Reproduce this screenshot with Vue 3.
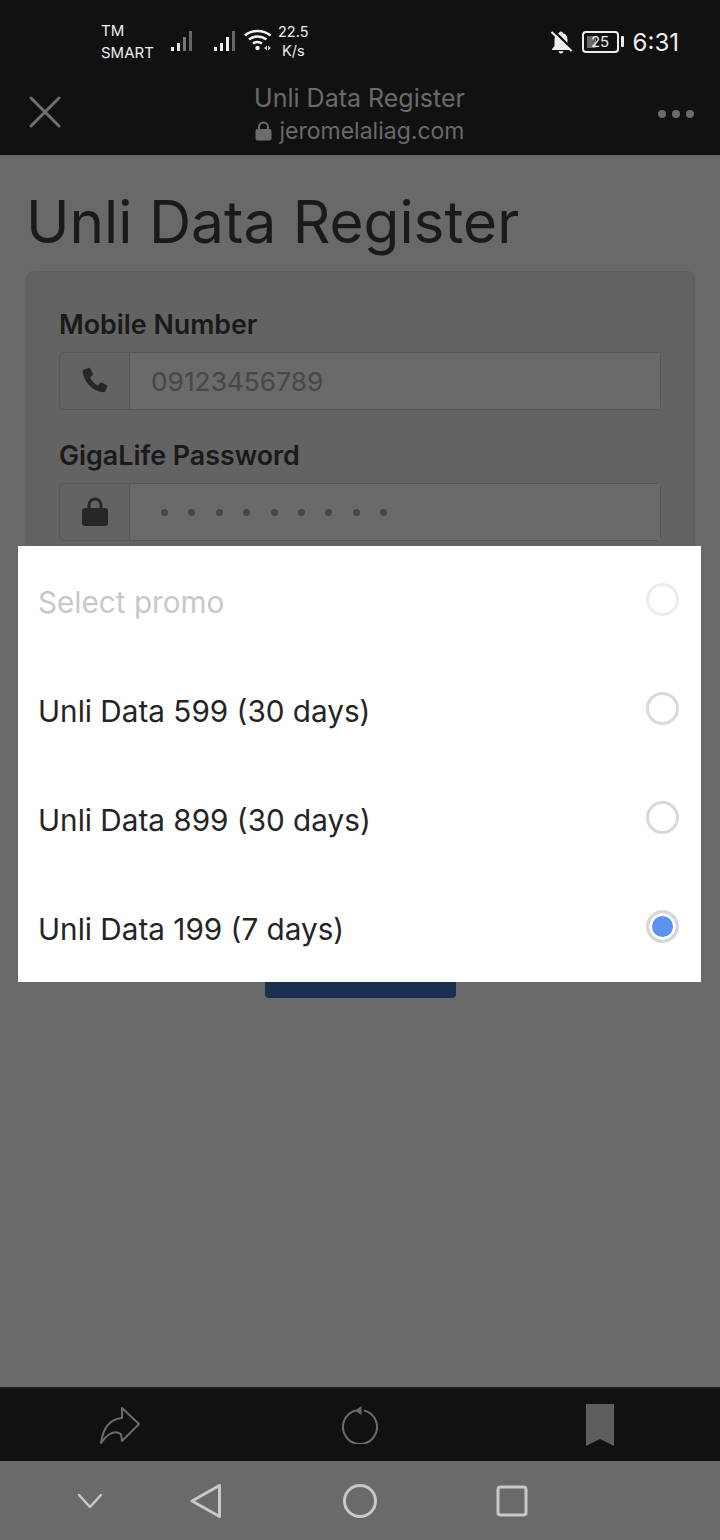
<template>
  <div class="screen">
    <div class="top-dark">
      <div class="status">
        <div class="carrier"><span>TM</span><span>SMART</span></div>
        <svg class="signal one" width="24" height="22" viewBox="0 0 24 22">
          <rect x="0" y="17" width="3" height="4" fill="#eee" />
          <rect x="6" y="13" width="3" height="8" fill="#ddd" />
          <rect x="12" y="7" width="3" height="14" fill="#777" />
          <rect x="18" y="1" width="3" height="20" fill="#666" />
        </svg>
        <svg class="signal two" width="24" height="22" viewBox="0 0 24 22">
          <rect x="0" y="17" width="3" height="4" fill="#eee" />
          <rect x="6" y="13" width="3" height="8" fill="#eee" />
          <rect x="12" y="7" width="3" height="14" fill="#eee" />
          <rect x="18" y="1" width="3" height="20" fill="#666" />
        </svg>
        <svg class="wifi" width="29" height="24" viewBox="0 0 29 24" fill="none" stroke="#f2f2f2" stroke-width="2.6">
          <path d="M1 7.500C8 1.500 19 1.500 26.500 7.500" />
          <path d="M5 11.500C10 7.500 17 7.500 22.500 11.500" />
          <path d="M9 15.500C12 13.500 15 13.500 18 15.500" />
          <circle cx="13.500" cy="20" r="2.200" fill="#f2f2f2" stroke="none" />
          <path d="M23 17.500v5l-3-2.500zM24 17.500v5l3-2.500z" fill="#ccc" stroke="none" />
        </svg>
        <div class="speed"><span>22.5</span><span>K/s</span></div>
        <div class="status-right">
          <svg width="24" height="24" viewBox="0 0 24 24">
            <path d="M12 1.500c-1.200 0-2 .8-2 1.800C6.800 4 5.500 6.500 5.500 10v6L3 19v1h18v-1l-2.500-3v-6c0-3.500-1.300-6-4.500-6.700 0-1-.8-1.800-2-1.800z" fill="#eee" />
            <path d="M9.500 21.200h5c-.3 1.300-1.300 2.300-2.500 2.300s-2.200-1-2.500-2.300z" fill="#eee" />
            <path d="M4.500 0.500l19 19" stroke="#111" stroke-width="2.500" />
            <path d="M2.500 2l20 19" stroke="#eee" stroke-width="2.200" />
          </svg>
          <div class="battery">
            <div class="battery-body">
              <div class="battery-fill"></div>
              <span>25</span>
            </div>
            <div class="battery-tip"></div>
          </div>
          <span class="clock">6:31</span>
        </div>
      </div>
      <div class="titlebar">
        <svg class="close" width="32" height="32" viewBox="0 0 32 32" stroke="#6f6f6f" stroke-width="3" stroke-linecap="round">
          <path d="M2 2l28 28M30 2L2 30" />
        </svg>
        <div class="title-text">
          <div class="title">Unli Data Register</div>
          <div class="url">
            <svg width="17" height="20" viewBox="0 0 17 20">
              <path d="M4 9V6a4.500 4.500 0 0 1 9 0v3" fill="none" stroke="#6c6c6c" stroke-width="2" />
              <rect x="0.500" y="8" width="16" height="11.500" rx="2" fill="#6c6c6c" />
            </svg>
            <span>jeromelaliag.com</span>
          </div>
        </div>
        <div class="dots"><i></i><i></i><i></i></div>
      </div>
    </div>

    <div class="page">
      <h1>Unli Data Register</h1>
      <div class="card">
        <label>Mobile Number</label>
        <div class="input-group">
          <div class="addon">
            <svg width="28" height="28" viewBox="0 0 28 28">
              <path d="M3.500 2.500 8 .8c.7-.2 1.200 0 1.500.6l2.300 5.500c.2.500.1 1-.3 1.400L9 10.500c1.500 3.300 4.200 6.200 7.800 8l2.300-2.600c.4-.4.900-.5 1.400-.3l5 2.300c.6.300.8.800.6 1.500l-1.800 5c-.2.600-.7.900-1.300.8C12 25 2.500 15 1.700 4c0-.6.300-1.300 1.800-1.500z" fill="#272727" />
            </svg>
          </div>
          <div class="field">09123456789</div>
        </div>
        <label>GigaLife Password</label>
        <div class="input-group">
          <div class="addon">
            <svg width="28" height="30" viewBox="0 0 28 30">
              <path d="M8 13V8a6 6 0 0 1 12 0v5" fill="none" stroke="#272727" stroke-width="3" />
              <rect x="1" y="11" width="26" height="18" rx="3" fill="#272727" />
            </svg>
          </div>
          <div class="field dots-field"><i v-for="n in 9" :key="n"></i></div>
        </div>
        <div class="submit"></div>
      </div>

      <div class="sheet">
        <div v-for="(promo, i) in promos" :key="promo" class="option" :class="{ muted: i === 0 }">
          <span>{{ promo }}</span>
          <span class="radio" :class="{ on: i === selected }"></span>
        </div>
      </div>
    </div>

    <div class="toolbar">
      <svg width="40" height="38" viewBox="0 0 40 38" fill="none" stroke="#6b6b6b" stroke-width="2" stroke-linejoin="round">
        <path d="M1 37C3 22 10 13 22 12V2L39 18 22 35 21 28C15 24 8 27 1 37z" />
      </svg>
      <svg width="36" height="38" viewBox="0 0 36 38" fill="none" stroke="#6b6b6b" stroke-width="2">
        <path d="M14 4.500A17 17 0 1 0 22 4.500" />
        <path d="M19.500 0v9l-6.500-4.500z" fill="#6b6b6b" stroke="none" />
      </svg>
      <svg width="28" height="42" viewBox="0 0 28 42">
        <path d="M0 0h28v42L14 35 0 42z" fill="#5e5e5e" />
      </svg>
    </div>

    <div class="navbar">
      <svg class="nav-down" width="26" height="16" viewBox="0 0 26 16" fill="none" stroke="#c8c8c8" stroke-width="2.500" stroke-linecap="round" stroke-linejoin="round">
        <path d="M2 2l11 12L24 2" />
      </svg>
      <svg class="nav-back" width="32" height="36" viewBox="0 0 32 36" fill="none" stroke="#c8c8c8" stroke-width="3" stroke-linejoin="round">
        <path d="M2 18 29.500 2.500v31z" />
      </svg>
      <svg class="nav-home" width="36" height="36" viewBox="0 0 36 36" fill="none" stroke="#c8c8c8" stroke-width="3">
        <circle cx="18" cy="18" r="15.500" />
      </svg>
      <svg class="nav-recent" width="32" height="32" viewBox="0 0 32 32" fill="none" stroke="#c8c8c8" stroke-width="3">
        <rect x="2" y="2" width="28" height="28" rx="2.500" />
      </svg>
    </div>
  </div>
</template>

<script setup>
const promos = [
  'Select promo',
  'Unli Data 599 (30 days)',
  'Unli Data 899 (30 days)',
  'Unli Data 199 (7 days)',
]
const selected = 3
</script>

<style>
html,
body {
  margin: 0;
  background: #696969;
}
</style>

<style scoped>
.screen {
  width: 720px;
  height: 1540px;
  display: flex;
  flex-direction: column;
  overflow: hidden;
  font-family: Inter, sans-serif;
  background: #696969;
}
.top-dark {
  background: #111;
  height: 155px;
  flex: none;
}
.status {
  height: 75px;
  display: flex;
  align-items: center;
  padding: 8px 41px 0 101px;
  box-sizing: border-box;
  color: #eee;
}
.carrier {
  display: flex;
  flex-direction: column;
  font-size: 15px;
  line-height: 22px;
  width: 70px;
  margin-top: 1px;
}
.signal.two {
  margin-left: 19px;
}
.signal {
  margin-top: -2px;
}
.wifi {
  margin-left: 6px;
  margin-top: -3px;
}
.speed {
  display: flex;
  flex-direction: column;
  align-items: center;
  font-size: 14.500px;
  line-height: 19px;
  margin-left: 5px;
  margin-top: -1px;
}
.status-right {
  margin-left: auto;
  display: flex;
  align-items: center;
}
.battery {
  display: flex;
  align-items: center;
  margin-left: 9px;
}
.battery-body {
  width: 37px;
  height: 22px;
  border: 2px solid #eee;
  border-radius: 4px;
  position: relative;
  display: flex;
  align-items: center;
  justify-content: center;
  box-sizing: border-box;
  font-size: 15px;
  line-height: 1;
}
.battery-body span {
  position: relative;
}
.battery-fill {
  position: absolute;
  left: 3px;
  top: 3px;
  bottom: 3px;
  width: 9px;
  background: #6a6a6a;
}
.battery-tip {
  width: 3px;
  height: 11px;
  margin-left: 2px;
  background: #eee;
  border-radius: 1px;
}
.clock {
  font-size: 24px;
  margin: 2px 0 0 9px;
}
.titlebar {
  height: 80px;
  display: flex;
  align-items: center;
  justify-content: space-between;
  padding: 0 26px 0 29px;
}
.close {
  margin-top: -6px;
}
.title-text {
  display: flex;
  flex-direction: column;
  align-items: center;
  color: #6a6a6a;
}
.title {
  font-size: 25px;
  line-height: 32px;
}
.url {
  display: flex;
  align-items: center;
  gap: 8px;
  font-size: 23px;
  line-height: 34px;
}
.dots {
  display: flex;
  gap: 6px;
  margin-top: -3px;
}
.dots i {
  width: 8px;
  height: 8px;
  border-radius: 50%;
  background: #6a6a6a;
}
.page {
  flex: 1;
  position: relative;
  padding: 0 25px 0 26px;
  background: #696969;
}
h1 {
  margin: 27px 0 9px;
  font-size: 58.500px;
  line-height: 80px;
  font-weight: 400;
  color: #1a1a1a;
  white-space: nowrap;
}
.card {
  background: #636363;
  border: 1px solid #5e5e5e;
  border-radius: 8px;
  padding: 33px 33px 0 32px;
  height: 700px;
  box-sizing: border-box;
}
label {
  display: block;
  font-size: 26.800px;
  line-height: 38px;
  font-weight: 600;
  color: #1a1a1a;
}
.input-group {
  display: flex;
  height: 58px;
  margin: 9px 0 26px;
  border: 1px solid #575757;
  border-radius: 5px;
  box-sizing: border-box;
}
.addon {
  width: 70px;
  display: flex;
  align-items: center;
  justify-content: center;
  border-right: 1px solid #555;
  flex: none;
  box-sizing: border-box;
}
.field {
  flex: 1;
  background: #6a6a6a;
  color: #474747;
  font-size: 26.300px;
  line-height: 58px;
  height: 56px;
  padding-left: 21px;
}
.dots-field {
  display: flex;
  align-items: center;
  gap: 20.400px;
  padding-left: 31px;
}
.dots-field i {
  width: 7px;
  height: 7px;
  border-radius: 50%;
  background: #474747;
}
.submit {
  width: 191px;
  height: 63px;
  margin: 394px 0 0 206px;
  background: #1a3050;
  border-radius: 4px;
}
.sheet {
  position: absolute;
  left: 18px;
  top: 391px;
  width: 683px;
  height: 436px;
  background: #fff;
  padding: 0 22px 0 20px;
  box-sizing: border-box;
}
.option {
  height: 109px;
  display: flex;
  align-items: center;
  justify-content: space-between;
  font-size: 29.700px;
  color: #242424;
}
.option > span:first-child {
  margin-top: 2px;
}
.option.muted {
  color: #c8c8c8;
}
.radio {
  width: 33px;
  height: 33px;
  border: 3px solid #d9d9d9;
  border-radius: 50%;
  box-sizing: border-box;
  margin-top: -2px;
}
.muted .radio {
  border-color: #ececec;
}
.radio.on {
  background: #5b93ee;
  box-shadow: inset 0 0 0 3px #fff;
}
.toolbar {
  height: 74px;
  flex: none;
  background: #111;
  border-top: 2px solid #1c1c1c;
  box-sizing: border-box;
  display: grid;
  grid-template-columns: repeat(3, 240px);
  justify-items: center;
  align-items: center;
}
.navbar {
  height: 79px;
  flex: none;
  background: #6a6a6a;
  display: flex;
  align-items: center;
  padding-left: 77px;
}
.nav-back {
  margin-left: 87px;
}
.nav-home {
  margin-left: 120px;
}
.nav-recent {
  margin-left: 118px;
}
</style>
